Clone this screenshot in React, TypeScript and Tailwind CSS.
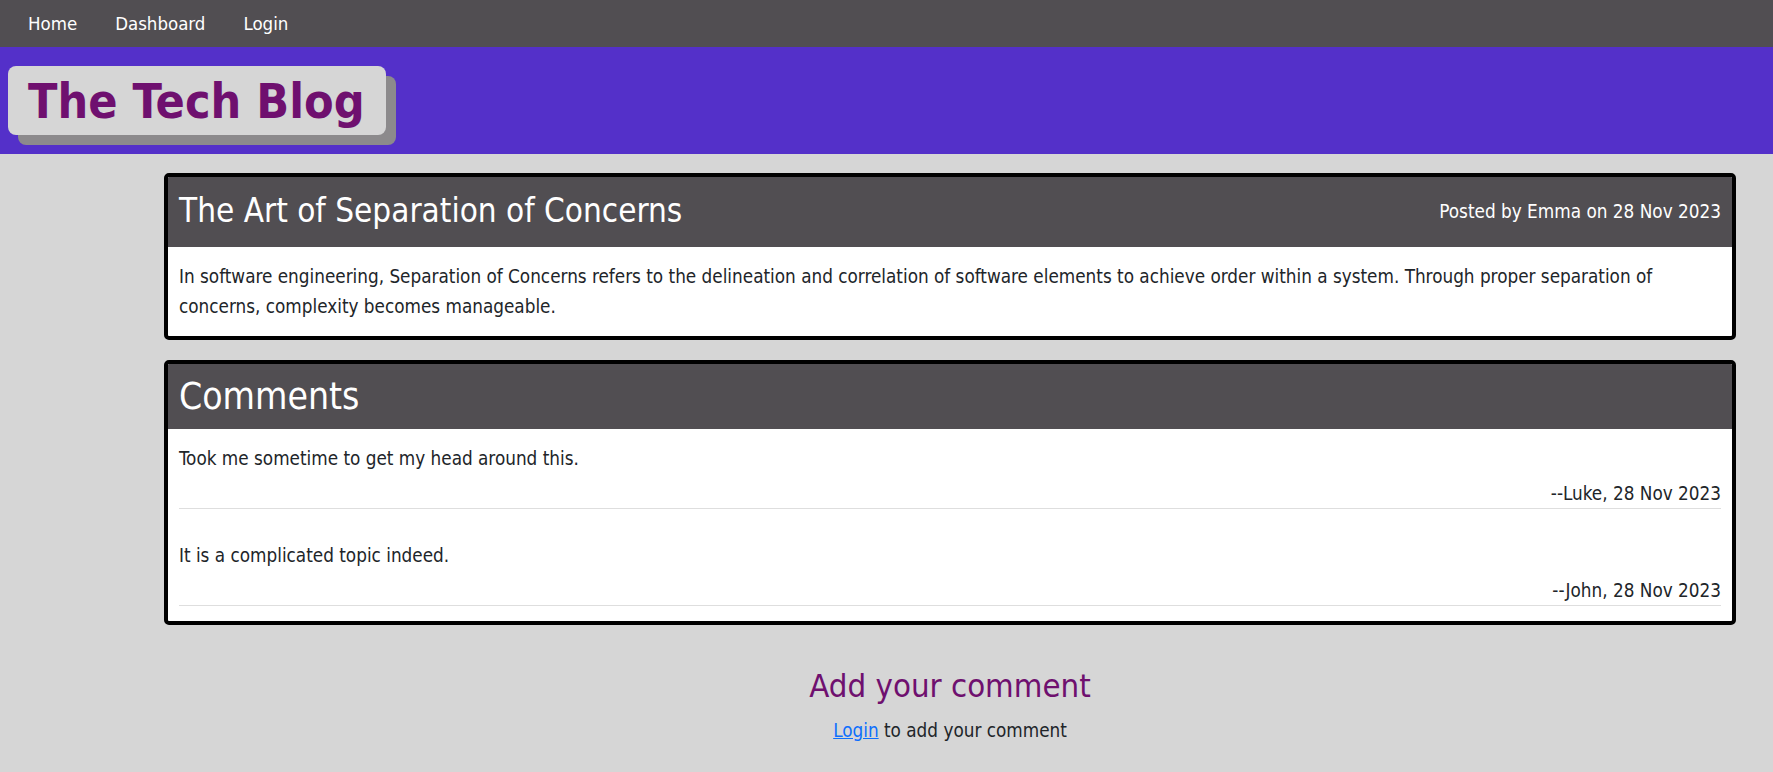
import React from 'react';

const comments = [
  { text: 'Took me sometime to get my head around this.', author: 'Luke', date: '28 Nov 2023' },
  { text: 'It is a complicated topic indeed.', author: 'John', date: '28 Nov 2023' },
];

export default function App() {
  return (
    <div className="min-h-screen bg-[#d6d6d6] font-['DejaVu_Sans_Condensed','DejaVu_Sans',sans-serif] text-[#212529]">
      {/* top nav */}
      <nav className="h-[47px] bg-[#514e52] flex items-center pl-[9px]">
        <a className="px-[19px] text-[18.5px] text-white">Home</a>
        <a className="px-[19px] text-[18.5px] text-white">Dashboard</a>
        <a className="px-[19px] text-[18.5px] text-white">Login</a>
      </nav>

      {/* banner */}
      <header className="h-[107px] bg-[#5430c9] pt-[19px] pl-[8px]">
        <div className="inline-flex h-[69px] w-[378px] items-center rounded-[8px] bg-[#d6d6d6] pl-[20px] shadow-[10px_10px_0_0_#8c8a8c]">
          <h1 className="text-[48px] font-bold leading-none text-[#6f106f]">The Tech Blog</h1>
        </div>
      </header>

      <main className="pl-[164px] pr-[37px] pt-[19px]">
        <article className="rounded-[5px] border-4 border-black bg-white overflow-hidden">
          <div className="h-[70px] bg-[#514e52] flex items-center justify-between px-[11px] text-white">
            <h2 className="text-[33px] pb-[3px]">The Art of Separation of Concerns</h2>
            <span className="text-[18.8px]">Posted by Emma on 28 Nov 2023</span>
          </div>
          <p className="px-[11px] pt-[15px] pb-[14px] text-[18.75px] leading-[30px]">
            In software engineering, Separation of Concerns refers to the delineation and correlation of software elements to achieve order within a system. Through proper separation of concerns, complexity becomes manageable.
          </p>
        </article>

        <section className="mt-[20px] rounded-[5px] border-4 border-black bg-white overflow-hidden">
          <div className="h-[65px] bg-[#514e52] flex items-center px-[11px]">
            <h2 className="text-[37px] text-white">Comments</h2>
          </div>
          <div className="flex flex-col gap-[32px] px-[11px] pt-[15px] pb-[15px]">
            {comments.map((c) => (
              <div key={c.author} className="border-b border-[#dedede] pb-[2px]">
                <p className="text-[18.75px] leading-[30px]">{c.text}</p>
                <p className="mt-[8px] text-right text-[18.75px] leading-[24px]">
                  --{c.author}, {c.date}
                </p>
              </div>
            ))}
          </div>
        </section>

        <div className="text-center">
          <h3 className="mt-[37px] text-[32.7px] text-[#6f106f]">Add your comment</h3>
          <p className="mt-[5px] text-[18.75px] leading-[30px]">
            <a className="text-[#0d6efd] underline">Login</a> to add your comment
          </p>
        </div>
      </main>
    </div>
  );
}
